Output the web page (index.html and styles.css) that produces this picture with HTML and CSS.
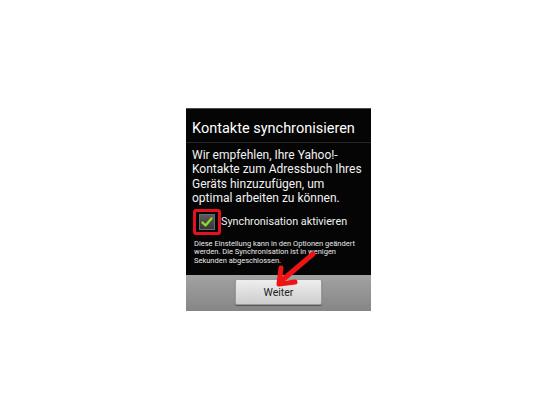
FILE: index.html
```html
<!DOCTYPE html>
<html lang="de">
<head>
  <meta charset="UTF-8">
  <title>Kontakte synchronisieren</title>
  <link rel="stylesheet" href="styles.css">
</head>
<body>
  <div class="geraet">
    <div class="kopf">Kontakte synchronisieren</div>

    <div class="inhalt">
      <p class="hinweis">Wir empfehlen, Ihre Yahoo!-<br>Kontakte zum Adressbuch Ihres Geräts hinzuzufügen, um optimal arbeiten zu können.</p>

      <div class="option">
        <span class="rahmen">
          <span class="kasten">
            <svg width="14" height="14" viewBox="0 0 14 14">
              <path d="M2.5 7.5 L5.5 10.5 L11.5 3.5" fill="none" stroke="#8fd92a" stroke-width="2.4" stroke-linecap="round" stroke-linejoin="round"/>
            </svg>
          </span>
        </span>
        <span class="option-text">Synchronisation aktivieren</span>
      </div>

      <p class="kleingedruckt">Diese Einstellung kann in den Optionen geändert werden. Die Synchronisation ist in wenigen Sekunden abgeschlossen.</p>
    </div>

    <div class="leiste">
      <button class="btn-weiter">Weiter</button>
    </div>

    <!-- roter Pfeil als Markierung -->
    <svg class="pfeil" width="185" height="203" viewBox="0 0 185 203">
      <g fill="none" stroke="#ee1414" stroke-width="5" stroke-linecap="round" stroke-linejoin="round">
        <line x1="127" y1="146" x2="94" y2="174"/>
        <polyline points="95,160 93,176 109,174"/>
      </g>
    </svg>
  </div>
</body>
</html>
```

FILE: styles.css
```css
html, body {
  margin: 0;
  padding: 0;
  height: 100%;
  background: #fff;
  font-family: Roboto, "Liberation Sans", sans-serif;
}

body {
  display: flex;
  align-items: center;
  justify-content: center;
}

.geraet {
  position: relative;
  width: 185px;
  height: 203px;
  background: #050505;
  border-top: 1px solid #4a4a4a;
  box-sizing: border-box;
  display: flex;
  flex-direction: column;
  color: #fff;
}

.kopf {
  height: 34px;
  box-sizing: border-box;
  padding: 6px 0 0 6px;
  display: flex;
  align-items: center;
  font-size: 14.5px;
  border-bottom: 1px solid #262626;
  white-space: nowrap;
}

.inhalt {
  flex: 1;
  padding: 5px 4px 0 6px;
}

.hinweis {
  margin: 0;
  font-size: 12px;
  line-height: 14.5px;
  color: #f2f2f2;
}

.option {
  display: flex;
  align-items: center;
  margin-top: 3px;
}

.rahmen {
  width: 28px;
  height: 26px;
  margin-left: 1px;
  box-sizing: border-box;
  border: 3px solid #e3121c;
  border-radius: 3px;
  display: flex;
  align-items: center;
  justify-content: center;
}

.kasten {
  width: 16px;
  height: 16px;
  box-sizing: border-box;
  background: linear-gradient(#5a5a5a, #363636);
  border: 1px solid #6a6a6a;
  display: flex;
  align-items: center;
  justify-content: center;
}

.option-text {
  font-size: 10.8px;
  color: #f2f2f2;
  white-space: nowrap;
}

.kleingedruckt {
  margin: 5px 0 0 2px;
  font-size: 7.5px;
  line-height: 8.7px;
  color: #e8e8e8;
}

.leiste {
  height: 36px;
  background: linear-gradient(#a2a2a2, #868686);
  display: flex;
  align-items: center;
  justify-content: center;
}

.btn-weiter {
  width: 87px;
  height: 26px;
  margin-top: -1px;
  border: 1px solid #9a9a9a;
  border-radius: 2px;
  background: linear-gradient(#eeeeee, #cdcdcd);
  box-shadow: 0 1px 1px rgba(0, 0, 0, 0.4);
  font-family: Roboto, "Liberation Sans", sans-serif;
  font-size: 10.5px;
  color: #222;
  padding: 0;
}

.pfeil {
  position: absolute;
  top: -1px;
  left: 0;
  pointer-events: none;
}
```
